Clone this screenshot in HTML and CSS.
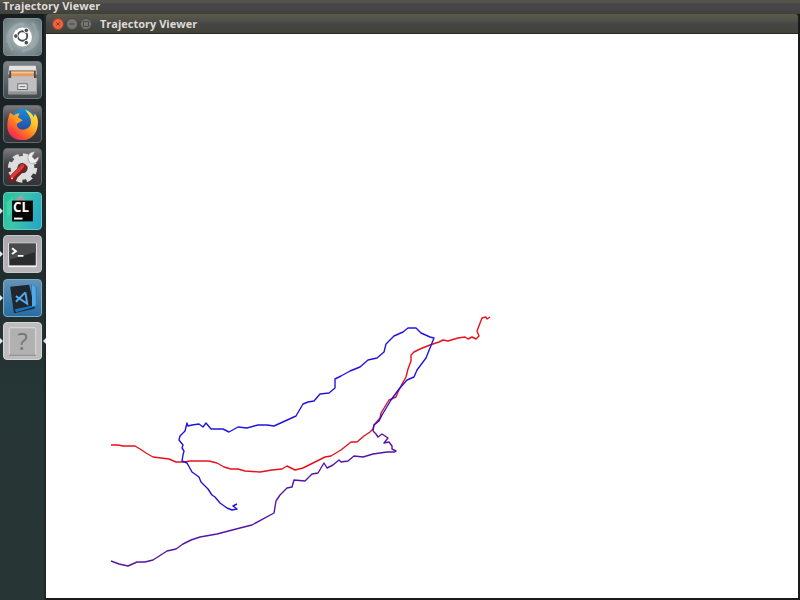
FILE: index.html
```html
<!DOCTYPE html>
<html lang="en">
<head>
<meta charset="utf-8">
<meta name="viewport" content="width=device-width, initial-scale=1">
<title>Trajectory Viewer</title>
<link rel="stylesheet" href="styles.css">
</head>
<body>
<header class="panel">Trajectory Viewer</header>
<div class="desktop">
  <nav class="launcher" aria-label="Launcher">
    <button class="tile dash" aria-label="Dash">
      <svg viewBox="0 0 38 38">
        <g fill="none" stroke="#c6d0d2" stroke-width="3" opacity=".25"><path d="M3 25C2 13 9 5 21 5M35 13c2 12-5 20-17 21M9 33C2 26 4 14 11 9M29 4c7 7 5 19-2 25"/></g>
        <circle cx="19" cy="19" r="10" fill="#fff"/>
        <circle cx="19" cy="18" r="5" fill="none" stroke="#454c50" stroke-width="2"/>
        <g fill="#454c50" stroke="#fff" stroke-width="1"><circle cx="12" cy="18" r="2.4"/><circle cx="23" cy="12" r="2.4"/><circle cx="23" cy="25" r="2.4"/></g>
      </svg>
    </button>
    <button class="tile files" aria-label="Files">
      <svg viewBox="0 0 38 38">
        <path d="M5 4h28l1 9H4z" fill="#e5e3e1"/><path d="M5 9h28v9H5z" fill="#554a43"/>
        <path d="M7 10h24v7H7z" fill="#e69a5d"/><path d="M7 10h24v2H7z" fill="#f5c69b"/>
        <path d="M4 17h3v-2h24v2h3v17H4z" fill="#bfbfc1"/><path d="M4 31h30v3H4z" fill="#929395"/>
        <rect x="14" y="23" width="10" height="6" fill="#e8e8e8" stroke="#66686b"/><path d="M16 26h6" stroke="#66686b"/>
      </svg>
    </button>
    <button class="tile dark" aria-label="Firefox">
      <svg viewBox="0 0 38 38">
        <defs>
          <linearGradient id="fox" x1="1" y1="0" x2=".2" y2="1"><stop offset="0" stop-color="#fff144"/><stop offset=".35" stop-color="#ffc52c"/><stop offset=".65" stop-color="#ff7421"/><stop offset="1" stop-color="#ed1c63"/></linearGradient>
          <linearGradient id="globe" x1="0" y1="0" x2="0" y2="1"><stop offset="0" stop-color="#178dde"/><stop offset="1" stop-color="#273b96"/></linearGradient>
        </defs>
        <circle cx="20" cy="17" r="14" fill="url(#globe)"/>
        <path d="M6 7l4 3c2-2 4-2 6-2l-2 4 5 3-6 4c0 4 3 6 6 6 5 0 9-3 9-8 0-6-4-9-6-13 5 2 8 5 9 8l1-4c3 4 4 8 3 13-1 9-8 15-16 15C9 36 3 30 3 21c0-5 1-10 3-14z" fill="url(#fox)"/>
        <path d="M9 12l5 0 5 3-6 3z" fill="#ff9d20"/><path d="M6 22c1 7 7 12 14 11-5-1-8-4-9-8z" fill="#ff4038" opacity=".65"/>
      </svg>
    </button>
    <button class="tile dark" aria-label="System settings">
      <svg viewBox="0 0 38 38">
        <circle cx="19" cy="20" r="13" fill="none" stroke="#ddd" stroke-width="5" stroke-dasharray="6 4.21"/>
        <circle cx="19" cy="20" r="9" fill="none" stroke="#dedede" stroke-width="7"/>
        <path d="M20 18l7-7" stroke="#d6d6d6" stroke-width="4"/>
        <path d="M25 11c-1-5 2-8 7-8l-3 5 3 3 4-3c0 6-4 8-9 7z" fill="#eee" stroke="#8d8d8d" stroke-width=".6"/>
        <path d="M8 31l12-12" stroke="#8c1718" stroke-width="7" stroke-linecap="round"/>
        <path d="M8 29l11-11" stroke="#d23b36" stroke-width="4" stroke-linecap="round"/><circle cx="8" cy="31" r="1" fill="#eee"/>
      </svg>
    </button>
    <button class="tile clion running" aria-label="CLion">
      <svg viewBox="0 0 38 38"><path d="M10 8l8-6 5 8z" fill="#d98aa0" opacity=".65"/><path d="M2 10l7-6 1 14-7 8z" fill="#52e2a5" opacity=".5"/><path d="M8 8h22v22H8z" fill="#050505"/><path d="M10 27h9" stroke="#fff" stroke-width="2"/><text class="clion-label" x="9" y="20">CL</text></svg>
    </button>
    <button class="tile terminal running" aria-label="Terminal">
      <svg viewBox="0 0 38 38">
        <rect x="4" y="7" width="30" height="26" rx="1" fill="#f0f0f0"/><path d="M5 8h28v23H5z" fill="#292b2d"/><path d="M5 8h28v9L5 25z" fill="#484b4c"/>
        <path d="M8 13l4 3-4 3M14 21h6" fill="none" stroke="#fff" stroke-width="2"/>
      </svg>
    </button>
    <button class="tile code running" aria-label="Visual Studio Code">
      <svg viewBox="0 0 38 38">
        <path d="M6 7l20-2 6 25-22 5z" fill="#20262d"/><path d="M28 5l6 3-1 20-21 6-1-3 19-4z" fill="#1775be"/><path d="M29 5l4 3v19l-4 1z" fill="#51a9e8"/>
        <path d="M22 13l2 12-12-8M22 13l-10 10" fill="none" stroke="#52aaf0" stroke-width="2"/>
      </svg>
    </button>
    <button class="tile unknown running active" aria-label="Trajectory Viewer">
      <svg viewBox="0 0 38 38"><rect x="5" y="5" width="28" height="29" rx="1" fill="#b1b1b1" stroke="#dedede"/><path d="M5 34h28" stroke="#777"/><text class="unknown-label" x="19" y="28">?</text></svg>
    </button>
  </nav>
  <main class="window">
    <div class="titlebar">
      <div class="controls">
        <button class="control close" aria-label="Close"><svg viewBox="0 0 12 12"><path d="M4 4l4 4M8 4L4 8"/></svg></button>
        <button class="control" aria-label="Minimize"><svg viewBox="0 0 12 12"><path d="M3 6h6"/></svg></button>
        <button class="control" aria-label="Maximize"><svg viewBox="0 0 12 12"><path d="M3 3h6v6H3z"/></svg></button>
      </div>
      <h1 class="title">Trajectory Viewer</h1>
    </div>
    <div class="plot">
      <svg viewBox="46 34 752 564" preserveAspectRatio="xMinYMin meet" role="img" aria-label="Trajectories">
        <g class="trace">
          <polyline class="red" points="111,445 118,445 123,446 135,446 140,449 146,453 153,457 161,458 169,459 176,462 184,462 190,461 209,461 217,463 224,467 231,469 238,469 245,471 260,472 272,470 282,469 287,466 295,470 303,468 311,464 325,457 331,456 341,450 351,442 357,442 364,436 370,432 373,429 374,425 380,418 381,413 389,400 396,397 398,392 402,384 406,377 408,369 411,361 411,355 414,352 420,349 430,345 439,342 443,340 448,341 458,338 465,337 468,339 472,337 476,339 479,336 477,331 482,318 486,317 487,319 490,317"/>
          <polyline class="blue" points="237,504 233,506 237,509 232,510 227,508 220,503 215,497 212,495 208,489 201,482 199,477 192,472 187,463 182,461 183,455 184,451 182,448 183,445 179,440 180,436 185,431 187,423 188,426 192,425 199,424 203,427 206,423 211,429 219,429 223,429 229,432 238,427 247,428 258,425 267,425 274,426 285,421 296,416 303,404 308,402 314,401 320,394 329,393 335,388 335,379 341,376 350,371 360,367 368,360 377,358 384,352 386,344 394,336 403,332 408,328 416,328 421,333 430,337 434,338 430,348 426,358 417,370 414,377 407,380 399,389 391,400 388,405 382,415 379,421 374,425 373,431"/>
          <polyline class="purple" points="111,561 119,564 128,566 137,562 145,562 153,560 167,551 176,549 183,544 191,540 200,537 217,534 240,528 252,525 274,513 276,501 280,495 287,488 292,487 294,480 305,481 312,474 318,473 324,463 327,468 333,465 339,460 341,462 348,461 354,456 363,457 373,454 387,452 394,452 396,451 392,449 392,446 389,442 384,443 388,438 382,434 378,437 376,434 373,431"/>
        </g>
      </svg>
    </div>
  </main>
</div>
</body>
</html>
```
FILE: styles.css
```css
* { box-sizing: border-box; }

body {
  margin: 0;
  min-height: 100vh;
  display: flex;
  flex-direction: column;
  overflow: hidden;
  background: #1d2526;
  color: #dfdbd2;
  font: bold 11px/12px "Open Sans", "Noto Sans", sans-serif;
}

button {
  padding: 0;
  border: 0;
}

svg { display: block; }

.panel {
  height: 14px;
  padding-left: 3px;
  background: linear-gradient(#59574a 0, #504f49 3px, #464649 4px, #464649 9px, #414234 14px);
}

.desktop {
  flex: 1;
  display: flex;
}

.launcher {
  flex: none;
  width: 46px;
  padding: 4px 4px 4px 3px;
  display: flex;
  flex-direction: column;
  background: linear-gradient(#171e20, #1c292b 30%, #263535 65%, #273535);
  border-right: 2px solid #202828;
}

.tile {
  position: relative;
  flex: none;
  width: 39px;
  height: 38px;
  margin-bottom: 5px;
  border: 1px solid #829095;
  border-radius: 4px;
  background: #414548;
}

.tile:nth-child(even) { margin-bottom: 6px; }

.tile svg {
  width: 100%;
  height: 100%;
}

.dash { background: radial-gradient(circle, #c7d1d1, #819194 60%, #667579); }
.files { background: linear-gradient(#788287, #424a50); border-color: #70797e; }
.dark { background: linear-gradient(#7b7b7d, #434346 40%, #333438); border-color: #66686b; }
.clion { background: linear-gradient(110deg, #24be9b, #3cc6aa 40%, #23a2ce); border-color: #68c9ba; }
.terminal { background: linear-gradient(#aaa7ad, #b8b6b9); border-color: #c9c6ca; }
.code { background: linear-gradient(#6194b7, #286da2); border-color: #80acc8; }
.unknown { background: #bdbdbd; border-color: #d5d5d5; }

.running::before,
.active::after {
  content: "";
  position: absolute;
  top: 15px;
  border: 3px solid transparent;
}

.running::before {
  left: -4px;
  border-left-color: #e4e8e8;
  border-right-width: 0;
}

.active::after {
  right: -5px;
  border-right-color: #e4e8e8;
  border-left-width: 0;
}

.clion-label {
  fill: #fff;
  font: bold 14px "Open Sans", sans-serif;
}

.unknown-label {
  fill: #777;
  font: 25px "Open Sans", sans-serif;
  text-anchor: middle;
}

.window {
  flex: 1;
  min-width: 0;
  display: flex;
  flex-direction: column;
  padding: 0 2px 2px 0;
  background: #1b1a1b;
}

.titlebar {
  height: 20px;
  display: flex;
  align-items: center;
  gap: 8px;
  padding-left: 6px;
  border-radius: 3px 3px 0 0;
  border-bottom: 1px solid #292a25;
  background: linear-gradient(#5c5a4c, #504f47 35%, #454649 50%, #424335);
}

.controls {
  display: flex;
  gap: 2px;
}

.control {
  width: 12px;
  height: 12px;
  border: 1px solid #494945;
  border-radius: 50%;
  background: #77766f;
}

.close {
  border-color: #93432a;
  background: #f1613b;
}

.control path {
  fill: none;
  stroke: #42413d;
  stroke-width: 1;
}

.title {
  margin: 0;
  font-size: 11px;
  line-height: 20px;
}

.plot {
  flex: 1;
  min-height: 0;
  background: #fff;
}

.plot svg {
  width: 100%;
  height: auto;
}

.trace {
  fill: none;
  stroke-width: 1.4;
  stroke-linejoin: round;
}

.red { stroke: #e8101c; }
.blue { stroke: #2014de; }
.purple { stroke: #5515a5; }
```
